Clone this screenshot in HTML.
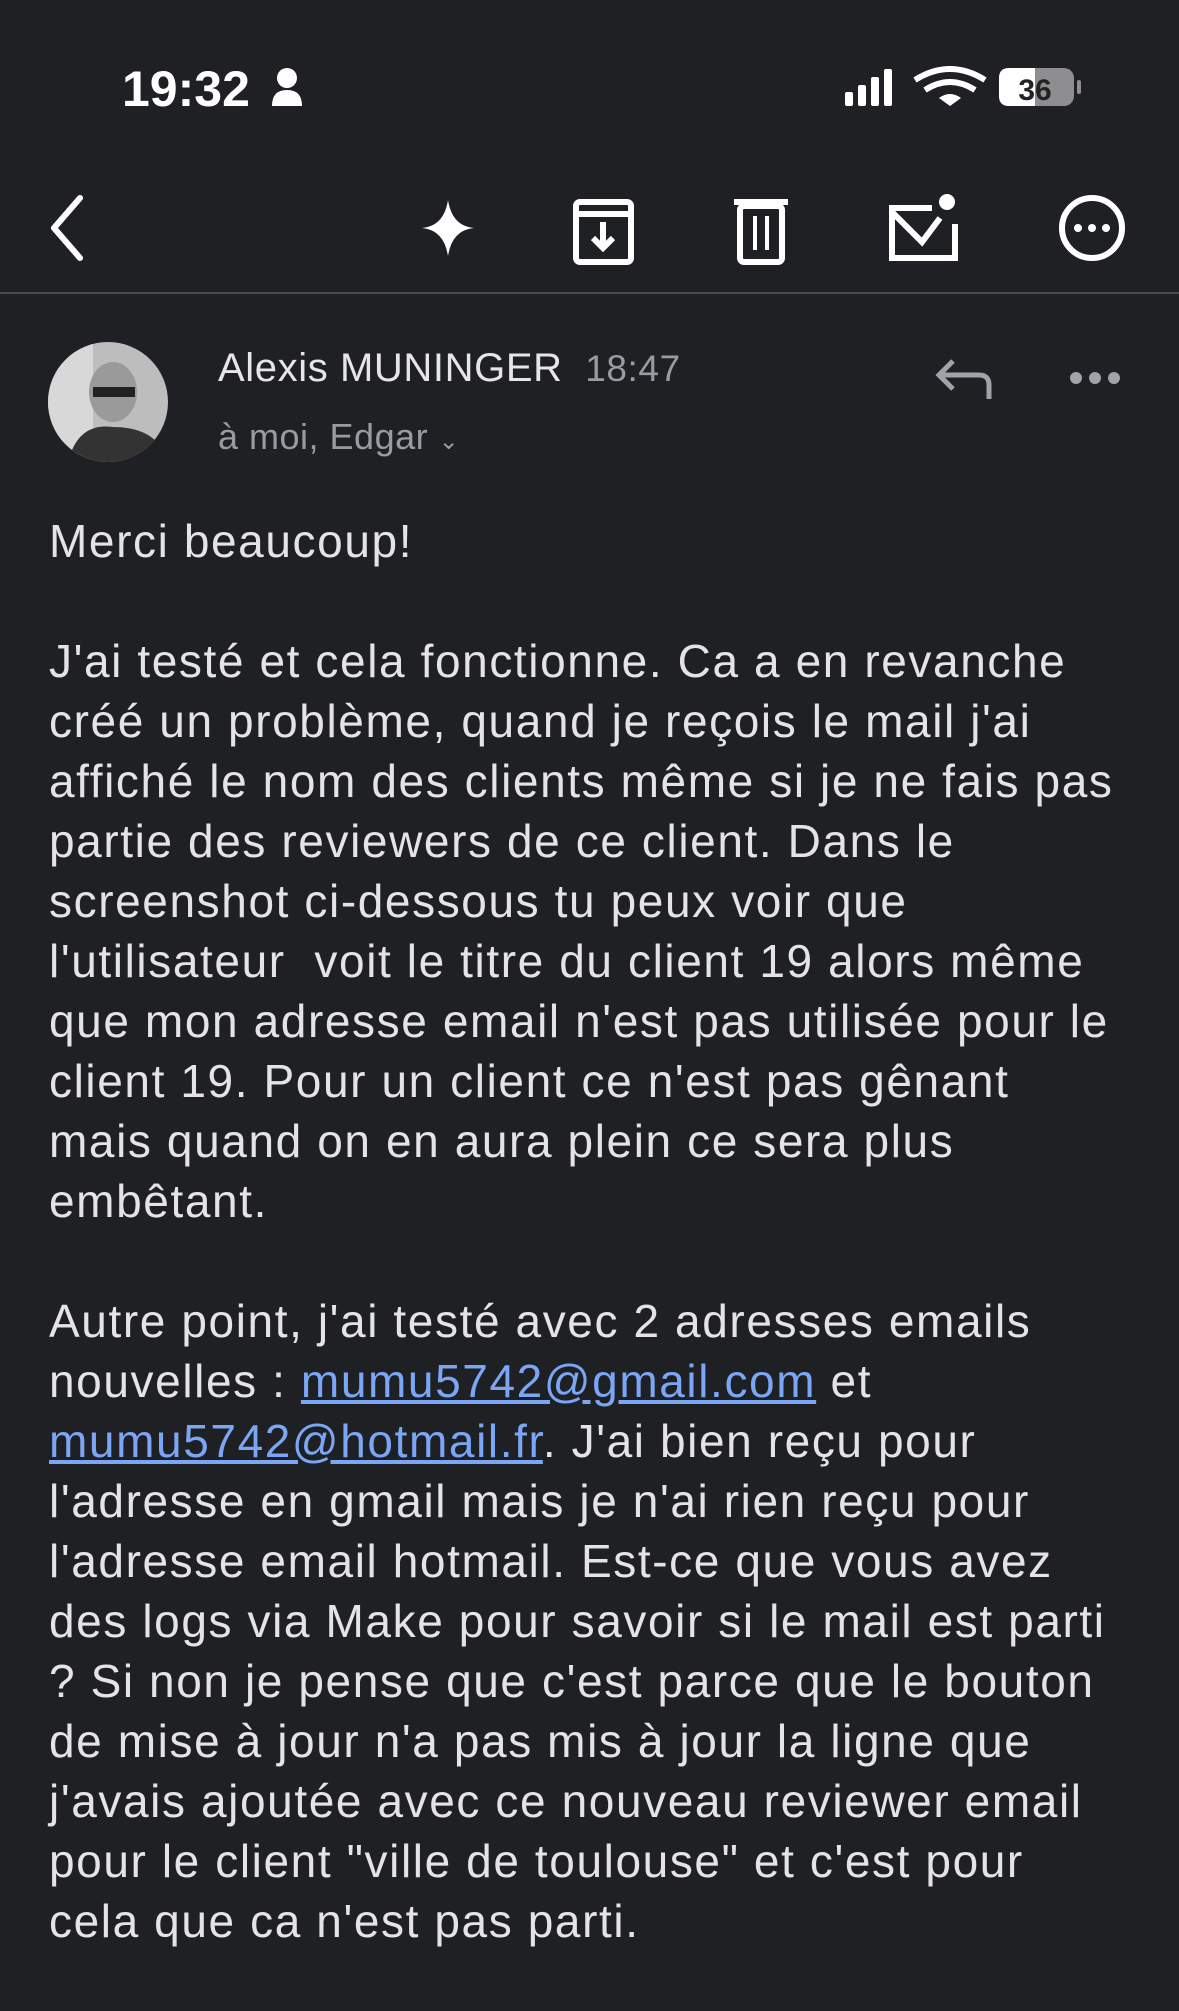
<html><head><style>
body{margin:0;width:1179px;height:2011px;background:#1f2023;overflow:hidden;font-family:"Liberation Sans",sans-serif;color:#e6e6e8;position:relative}
.a{position:absolute;white-space:pre}
.body{position:absolute;left:49px;top:511px;font-size:46px;letter-spacing:1.6px;line-height:60px;white-space:pre;color:#e4e4e6}
a{color:#7aa6f5;text-decoration:underline}
</style></head><body>
<div class="a" style="left:122px;top:60px;font-size:50px;font-weight:bold;color:#fff">19:32</div>
<svg class="a" style="left:270px;top:66px" width="34" height="42"><circle cx="17" cy="12" r="10" fill="#fff"/><path d="M2 40 Q2 24 17 24 Q32 24 32 40Z" fill="#fff"/></svg>
<svg class="a" style="left:845px;top:66px" width="240" height="42">
<rect x="0" y="26" width="8" height="14" rx="2" fill="#fff"/><rect x="13" y="19" width="8" height="21" rx="2" fill="#fff"/><rect x="26" y="11" width="8" height="29" rx="2" fill="#fff"/><rect x="39" y="3" width="8" height="37" rx="2" fill="#fff"/>
<path d="M70 14 Q105 -8 140 14" stroke="#fff" stroke-width="6" fill="none"/><path d="M80 24 Q105 8 130 24" stroke="#fff" stroke-width="6" fill="none"/><path d="M94 32 L105 40 L116 32 Q105 24 94 32Z" fill="#fff"/>
<rect x="154" y="2" width="75" height="38" rx="10" fill="#8e8e90"/><path d="M164 2 H190 V40 H164 Q154 40 154 30 V12 Q154 2 164 2Z" fill="#fff"/><rect x="232" y="14" width="4" height="14" rx="2" fill="#8e8e90"/>
<text x="190" y="34" font-size="30" font-weight="bold" text-anchor="middle" fill="#222" font-family="Liberation Sans">36</text></svg>
<svg class="a" style="left:0;top:190px" width="1179" height="80" fill="none" stroke="#fff" stroke-width="6">
<path d="M80 8 L54 38 L80 68" stroke-linecap="round" stroke-linejoin="round"/>
<path d="M448 10 Q452 36 474 38 Q452 40 448 66 Q444 40 422 38 Q444 36 448 10Z" fill="#fff" stroke="none"/>
<rect x="576" y="12" width="55" height="60" rx="4"/><line x1="576" y1="24" x2="631" y2="24"/><path d="M603 32 V58 M593 48 L603 58 L613 48"/>
<rect x="740" y="16" width="42" height="56" rx="4"/><line x1="734" y1="12" x2="788" y2="12"/><line x1="755" y1="26" x2="755" y2="60" stroke-width="4"/><line x1="767" y1="26" x2="767" y2="60" stroke-width="4"/>
<path d="M932 18 H892 V68 H955 V34"/><path d="M892 22 L922 52 L940 28"/><circle cx="947" cy="12" r="8" fill="#fff" stroke="none"/>
<circle cx="1092" cy="38" r="30"/><circle cx="1078" cy="38" r="4" fill="#fff" stroke="none"/><circle cx="1092" cy="38" r="4" fill="#fff" stroke="none"/><circle cx="1106" cy="38" r="4" fill="#fff" stroke="none"/>
</svg>
<div class="a" style="left:0;top:292px;width:1179px;height:2px;background:#4a4b4e"></div>
<svg class="a" style="left:48px;top:342px" width="120" height="120"><defs><clipPath id="c"><circle cx="60" cy="60" r="60"/></clipPath></defs><g clip-path="url(#c)"><rect width="120" height="120" fill="#bdbdbd"/><rect x="0" y="0" width="45" height="120" fill="#d8d8d8"/><ellipse cx="65" cy="50" rx="24" ry="30" fill="#9a9a9a"/><path d="M20 120 Q30 80 65 85 Q110 85 120 120Z" fill="#333"/><rect x="45" y="45" width="42" height="10" fill="#222"/></g></svg>
<div class="a" style="left:218px;top:346px;font-size:40px;letter-spacing:0.6px;color:#e6e6e8">Alexis MUNINGER <span style="color:#9a9ba0;font-size:37px">&nbsp;18:47</span></div>
<div class="a" style="left:218px;top:416px;font-size:36px;letter-spacing:0.5px;color:#9a9ba0">à moi, Edgar <span style="font-size:24px">⌄</span></div>
<svg class="a" style="left:935px;top:355px" width="60" height="50" fill="none" stroke="#a2a3a8" stroke-width="5"><path d="M18 6 L4 20 L18 34 M4 20 H44 Q54 20 54 30 V44"/></svg>
<svg class="a" style="left:1068px;top:370px" width="54" height="16" fill="#a2a3a8"><circle cx="8" cy="8" r="6"/><circle cx="27" cy="8" r="6"/><circle cx="46" cy="8" r="6"/></svg>
<div class="body">Merci beaucoup!

J'ai testé et cela fonctionne. Ca a en revanche
créé un problème, quand je reçois le mail j'ai
affiché le nom des clients même si je ne fais pas
partie des reviewers de ce client. Dans le
screenshot ci-dessous tu peux voir que
l'utilisateur  voit le titre du client 19 alors même
que mon adresse email n'est pas utilisée pour le
client 19. Pour un client ce n'est pas gênant
mais quand on en aura plein ce sera plus
embêtant.

Autre point, j'ai testé avec 2 adresses emails
nouvelles : <a>mumu5742@gmail.com</a> et
<a>mumu5742@hotmail.fr</a>. J'ai bien reçu pour
l'adresse en gmail mais je n'ai rien reçu pour
l'adresse email hotmail. Est-ce que vous avez
des logs via Make pour savoir si le mail est parti
? Si non je pense que c'est parce que le bouton
de mise à jour n'a pas mis à jour la ligne que
j'avais ajoutée avec ce nouveau reviewer email
pour le client "ville de toulouse" et c'est pour
cela que ca n'est pas parti.</div>
</body></html>
